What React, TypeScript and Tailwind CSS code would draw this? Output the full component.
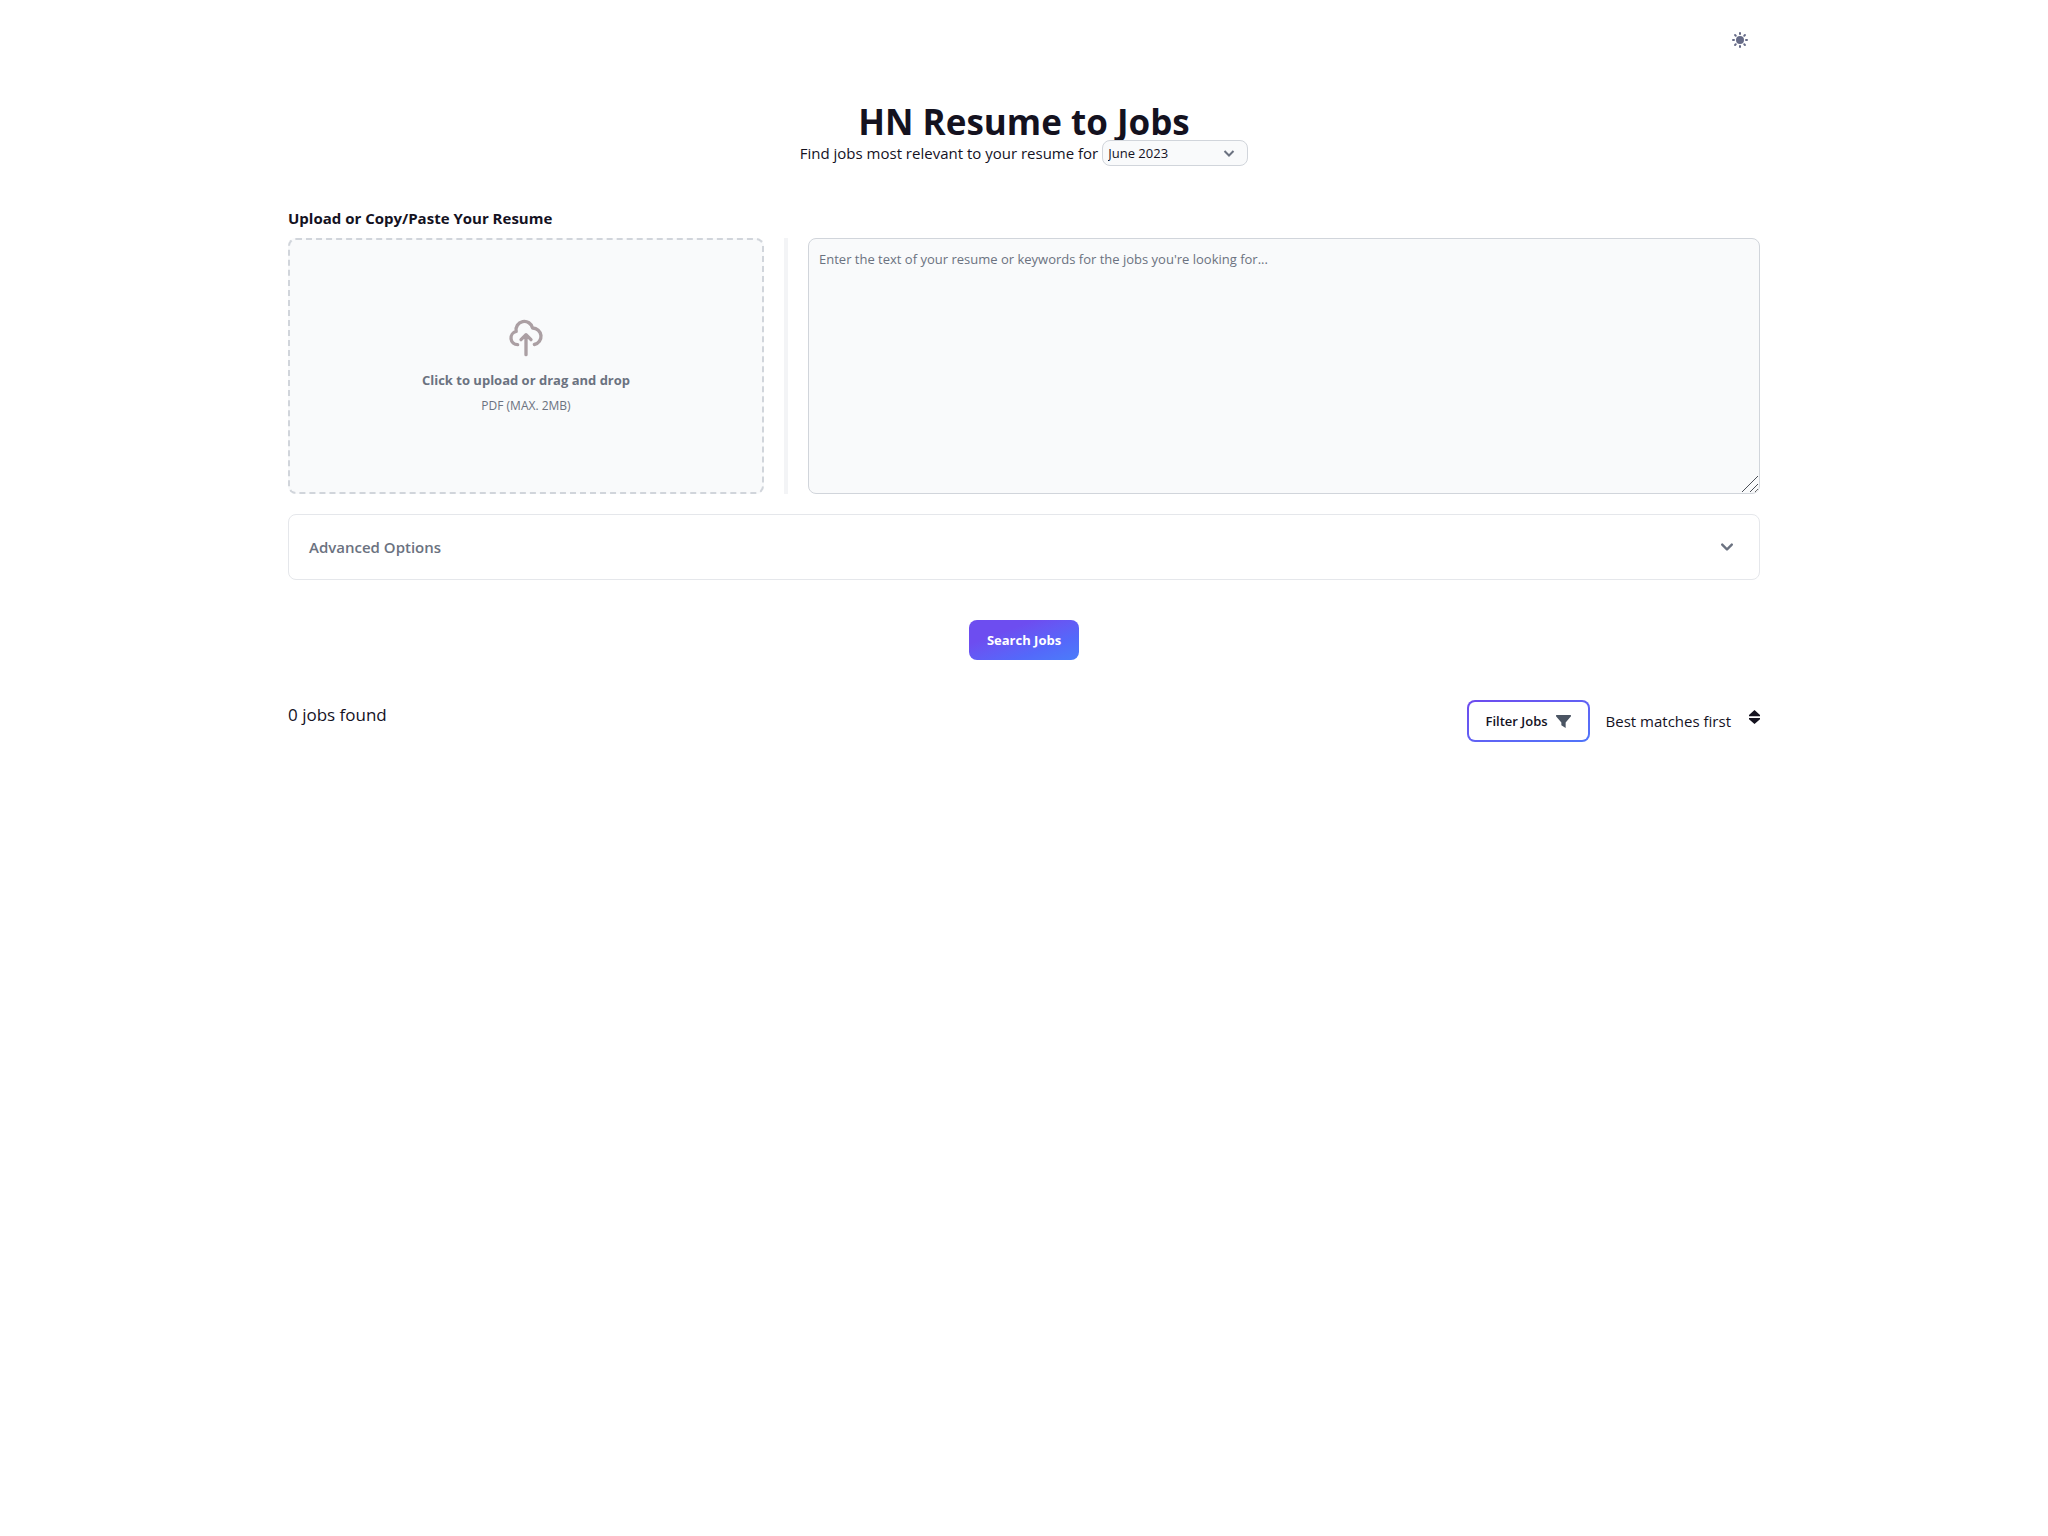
import { useState } from "react";

const months = ["June 2023", "May 2023", "April 2023"];

function SunIcon() {
  return (
    <svg className="size-5" fill="currentColor" viewBox="0 0 20 20" aria-hidden="true">
      <path
        fillRule="evenodd"
        clipRule="evenodd"
        d="M10 2a1 1 0 011 1v1a1 1 0 11-2 0V3a1 1 0 011-1zm4 8a4 4 0 11-8 0 4 4 0 018 0zm-.464 4.95l.707.707a1 1 0 001.414-1.414l-.707-.707a1 1 0 00-1.414 1.414zm2.12-10.607a1 1 0 010 1.414l-.706.707a1 1 0 11-1.414-1.414l.707-.707a1 1 0 011.414 0zM17 11a1 1 0 100-2h-1a1 1 0 100 2h1zm-7 4a1 1 0 011 1v1a1 1 0 11-2 0v-1a1 1 0 011-1zM5.05 6.464A1 1 0 106.465 5.05l-.708-.707a1 1 0 00-1.414 1.414l.707.707zm1.414 8.486l-.707.707a1 1 0 01-1.414-1.414l.707-.707a1 1 0 011.414 1.414zM4 11a1 1 0 100-2H3a1 1 0 000 2h1z"
      />
    </svg>
  );
}

function UploadBox() {
  return (
    <label
      htmlFor="resume-file"
      className="flex h-64 cursor-pointer flex-col items-center justify-center rounded-lg border-2 border-dashed border-[#d1d5db] bg-[#f9fafb] text-[#6b7280]"
    >
      <svg className="mb-3 size-10 text-[#ab9fa3]" fill="none" stroke="currentColor" viewBox="0 0 24 24" aria-hidden="true">
        <path
          strokeLinecap="round"
          strokeLinejoin="round"
          strokeWidth={2}
          d="M7 16a4 4 0 01-.88-7.903A5 5 0 1115.9 6L16 6a5 5 0 011 9.9M15 13l-3-3m0 0l-3 3m3-3v12"
        />
      </svg>
      <span className="mb-2 text-[13px] leading-5 font-bold">Click to upload or drag and drop</span>
      <span className="text-[12px] leading-4">PDF (MAX. 2MB)</span>
      <input id="resume-file" type="file" accept="application/pdf" className="sr-only" />
    </label>
  );
}

export default function App() {
  const [month, setMonth] = useState(months[0]);
  const [resume, setResume] = useState("");
  const [showOptions, setShowOptions] = useState(false);

  return (
    <div className="mx-auto max-w-screen-2xl px-8 py-5 font-['Open_Sans','Noto_Sans',sans-serif] text-[#14121f]">
      <header>
        <div className="flex justify-end">
          <button type="button" aria-label="Toggle dark mode" className="rounded-lg p-2.5 text-[#666b87]">
            <SunIcon />
          </button>
        </div>
        <h1 className="mt-11 text-center text-[35px] leading-9 font-bold">HN Resume to Jobs</h1>
        <div className="flex items-center justify-center gap-1">
          <label htmlFor="month" className="text-[15px] leading-6">
            Find jobs most relevant to your resume for
          </label>
          <div className="relative">
            <select
              id="month"
              value={month}
              onChange={(e) => setMonth(e.target.value)}
              className="block h-[26px] w-[146px] appearance-none rounded-lg border border-[#d1d5db] bg-[#f9fafb] px-[5px] pt-px text-[13px]"
            >
              {months.map((m) => (
                <option key={m}>{m}</option>
              ))}
            </select>
            <svg className="pointer-events-none absolute top-1.5 right-3 size-3.5 text-[#6b7280]" fill="none" stroke="currentColor" strokeWidth={2} viewBox="0 0 14 14" aria-hidden="true">
              <path d="M2.5 5l4.5 4.5L11.5 5" />
            </svg>
          </div>
        </div>
      </header>

      <main>
        <label htmlFor="resume" className="mt-10 mb-2 block text-[15px] leading-6 font-bold">
          Upload or Copy/Paste Your Resume
        </label>
        <div className="grid grid-cols-[1fr_4px_2fr] gap-5">
          <UploadBox />
          <div className="bg-[#f3f4f6]" />
          <div className="relative">
            <textarea
              id="resume"
              value={resume}
              onChange={(e) => setResume(e.target.value)}
              placeholder="Enter the text of your resume or keywords for the jobs you're looking for..."
              className="block h-64 w-full rounded-lg border border-[#d1d5db] bg-[#f9fafb] p-2.5 text-[13px] leading-5 placeholder:text-[#6b7280]"
            />
            {/* larger resize grip */}
            <svg className="pointer-events-none absolute right-0.5 bottom-0.5 size-4 rounded-br-md bg-[#f9fafb] text-[#4b4f58]" fill="none" stroke="currentColor" viewBox="0 0 16 16" aria-hidden="true">
              <path d="M0 16L16 0M8 16l8-8" />
            </svg>
          </div>
        </div>

        <button
          type="button"
          aria-expanded={showOptions}
          onClick={() => setShowOptions(!showOptions)}
          className="mt-5 flex w-full items-center justify-between rounded-lg border border-[#e5e7eb] p-5 text-[15px] leading-6 font-semibold text-[#6b7280]"
        >
          Advanced Options
          <svg className="size-6" fill="currentColor" viewBox="0 0 20 20" aria-hidden="true">
            <path
              fillRule="evenodd"
              clipRule="evenodd"
              d="M5.293 7.293a1 1 0 011.414 0L10 10.586l3.293-3.293a1 1 0 111.414 1.414l-4 4a1 1 0 01-1.414 0l-4-4a1 1 0 010-1.414z"
            />
          </svg>
        </button>

        <div className="mt-10 flex justify-center">
          <button
            type="button"
            className="rounded-lg bg-linear-to-br from-[#6d4df0] from-30% via-[#5468fa] via-70% to-[#4a7dfa] px-[18px] py-2.5 text-[13px] leading-5 font-bold text-white"
          >
            Search Jobs
          </button>
        </div>

        <div className="mt-10 flex items-start justify-between">
          <p className="text-[17px] leading-[30px]">0 jobs found</p>
          <div className="flex items-center gap-4">
            <button type="button" className="rounded-lg bg-linear-to-br from-[#6d4aee] to-[#4f75fa] p-0.5">
              <span className="flex items-center gap-2 rounded-md bg-white px-[17px] py-[9px] text-[13px] leading-5 font-semibold">
                Filter Jobs
                <svg className="size-[15px] text-[#4b5563]" fill="currentColor" viewBox="0 0 14 14" aria-hidden="true">
                  <path d="M.5 1h13q.5 0 .5.5v.5L9 8v5L5 10.500V8L0 2v-.5Q0 1 .5 1z" />
                </svg>
              </span>
            </button>
            <button type="button" className="flex items-center gap-[18px] text-[15px] leading-6">
              Best matches first
              <svg className="mb-2 h-3.5 w-[11px]" fill="currentColor" viewBox="0 0 11 14" aria-hidden="true">
                <path d="M5.500 0L11 5v1.200H0V5zM0 8h11v1.200L5.500 14 0 9.200z" />
              </svg>
            </button>
          </div>
        </div>
      </main>
    </div>
  );
}
